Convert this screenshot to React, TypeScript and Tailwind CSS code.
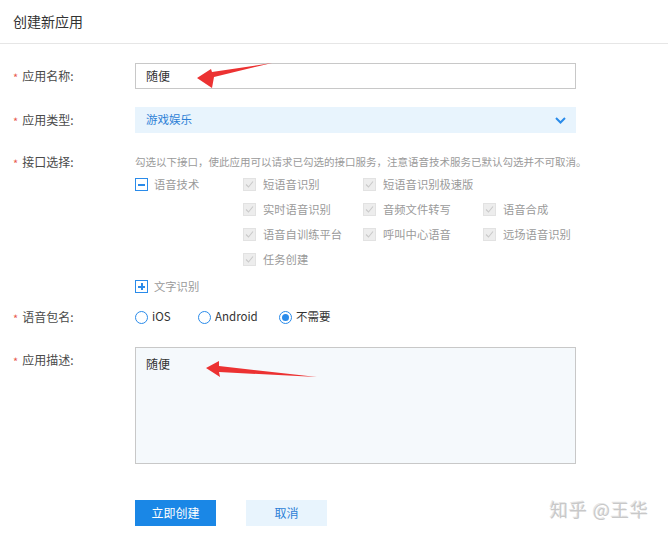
import React from "react";

const Req = () => <span className="text-[#e85a4f] mr-[4px] text-[11px] leading-none relative top-[1px]">*</span>;

const Label = ({ text, h = 26 }: { text: string; h?: number }) => (
  <div
    className="w-[135px] shrink-0 pl-[13px] flex items-center text-[12px] text-[#4a4a4a]"
    style={{ height: h }}
  >
    <Req />
    <span>{text}</span>
  </div>
);

const DisabledCheck = ({ text }: { text: string }) => (
  <div className="flex items-center h-[25px]">
    <span className="w-[13px] h-[13px] bg-[#ededed] border border-[#e2e2e2] flex items-center justify-center">
      <svg width="9" height="9" viewBox="0 0 9 9">
        <path d="M1 4.5 L3.5 7 L8 1.5" fill="none" stroke="#c9c9c9" strokeWidth="1.1" />
      </svg>
    </span>
    <span className="ml-[7px] text-[11.3px] text-[#9a9a9a]">{text}</span>
  </div>
);

const Radio = ({ text, checked, w }: { text: string; checked?: boolean; w: string }) => (
  <div className={`flex items-center ${w}`}>
    <span className="w-[13px] h-[13px] rounded-full border-[1.5px] border-[#2a8bea] flex items-center justify-center bg-white">
      {checked && <span className="w-[7px] h-[7px] rounded-full bg-[#2a8bea]" />}
    </span>
    <span className="ml-[4px] text-[11.5px] text-[#333]">{text}</span>
  </div>
);

export default function App() {
  return (
    <div className="relative w-[668px] h-[534px] bg-white overflow-hidden font-['Noto_Sans_CJK_SC',sans-serif]">
      <div className="h-[44px] border-b border-[#e6e6e6] flex items-center pl-[13px] text-[14px] text-[#333]">
        创建新应用
      </div>

      <div className="pt-[19px]">
        {/* 应用名称 */}
        <div className="flex">
          <Label text="应用名称:" />
          <div className="w-[441px] h-[26px] border border-[#c8c8c8] flex items-center pl-[10px] text-[12px] text-[#333]">
            随便
          </div>
        </div>

        {/* 应用类型 */}
        <div className="flex mt-[18px]">
          <Label text="应用类型:" />
          <div className="w-[441px] h-[26px] bg-[#e8f4fd] flex items-center justify-between pl-[11px] pr-[10px] text-[11.5px] text-[#2d7fd6]">
            <span>游戏娱乐</span>
            <svg width="11" height="7" viewBox="0 0 11 7">
              <path d="M1 1 L5.5 5.5 L10 1" fill="none" stroke="#2a8bea" strokeWidth="2" />
            </svg>
          </div>
        </div>

        {/* 接口选择 */}
        <div className="flex mt-[19px]">
          <Label text="接口选择:" h={20} />
          <div className="flex flex-col">
            <div className="h-[20px] flex items-center text-[10.5px] text-[#9a9a9a] whitespace-nowrap">
              勾选以下接口，使此应用可以请求已勾选的接口服务，注意语音技术服务已默认勾选并不可取消。
            </div>
            <div className="flex">
              <div className="w-[108px] h-[25px] flex items-center">
                <span className="w-[13px] h-[13px] border-[1.5px] border-[#2a8bea] flex items-center justify-center bg-white">
                  <span className="w-[7px] h-[2px] bg-[#2a8bea]" />
                </span>
                <span className="ml-[6px] text-[11.3px] text-[#9a9a9a]">语音技术</span>
              </div>
              <div className="grid grid-cols-[120px_120px_120px]">
                <DisabledCheck text="短语音识别" />
                <DisabledCheck text="短语音识别极速版" />
                <div />
                <DisabledCheck text="实时语音识别" />
                <DisabledCheck text="音频文件转写" />
                <DisabledCheck text="语音合成" />
                <DisabledCheck text="语音自训练平台" />
                <DisabledCheck text="呼叫中心语音" />
                <DisabledCheck text="远场语音识别" />
                <DisabledCheck text="任务创建" />
              </div>
            </div>
            <div className="h-[25px] mt-[2px] flex items-center">
              <span className="w-[13px] h-[13px] border-[1.5px] border-[#2a8bea] flex items-center justify-center bg-white relative">
                <span className="w-[7px] h-[2px] bg-[#2a8bea] absolute" />
                <span className="w-[2px] h-[7px] bg-[#2a8bea] absolute" />
              </span>
              <span className="ml-[6px] text-[11.3px] text-[#9a9a9a]">文字识别</span>
            </div>
          </div>
        </div>

        {/* 语音包名 */}
        <div className="flex mt-[6px]">
          <Label text="语音包名:" h={24} />
          <div className="h-[24px] flex items-center">
            <Radio text="iOS" w="w-[63px]" />
            <Radio text="Android" w="w-[81px]" />
            <Radio text="不需要" checked w="w-[80px]" />
          </div>
        </div>

        {/* 应用描述 */}
        <div className="flex mt-[18px]">
          <Label text="应用描述:" h={26} />
          <div className="w-[441px] h-[117px] border border-[#c8c8c8] bg-[#f5f9fc] pl-[10px] pt-[7px] text-[12px] text-[#333]">
            随便
          </div>
        </div>

        {/* Buttons */}
        <div className="flex mt-[36px] pl-[135px] gap-[30px]">
          <button className="w-[81px] h-[26px] bg-[#1a87e6] text-white text-[12px]">立即创建</button>
          <button className="w-[81px] h-[26px] bg-[#e8f4fd] text-[#2d7fd6] text-[12px]">取消</button>
        </div>
      </div>

      {/* Annotation arrows */}
      <svg className="absolute left-0 top-0 pointer-events-none" width="668" height="534">
        <polygon
          points="197,78 211,69 212,72 272,63 214,77 212,88"
          fill="#ec3232"
        />
        <polygon
          points="206,368 219,361 219,366 317,377 219,372 220,377"
          fill="#ec3232"
        />
      </svg>

      {/* Watermark */}
      <div className="absolute right-[19px] top-[496px] text-[18px] text-[#c8c8c8] tracking-[1px] [text-shadow:1px_1px_0_#ffffff,-1px_-1px_0_#e6e6e6]">
        知乎 @王华
      </div>
    </div>
  );
}
